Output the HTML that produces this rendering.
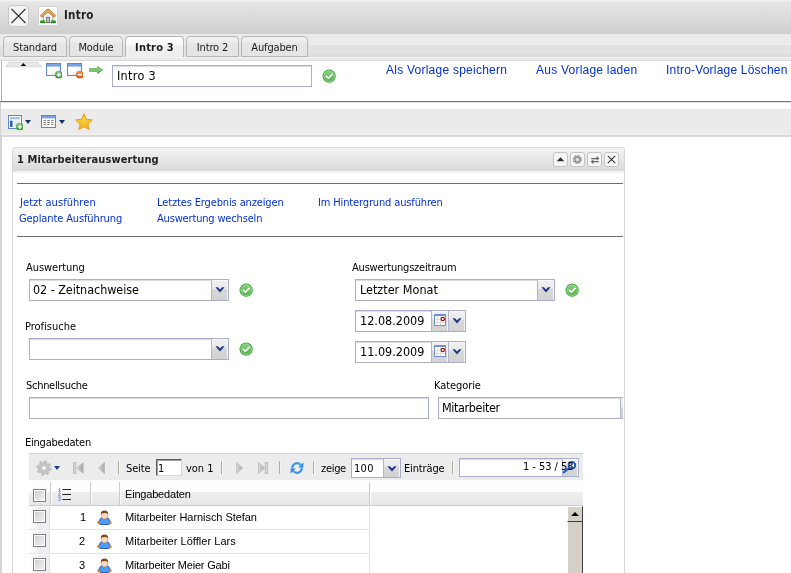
<!DOCTYPE html>
<html lang="de">
<head>
<meta charset="utf-8">
<title>Intro</title>
<style>
html,body{margin:0;padding:0;}
body{width:791px;height:573px;overflow:hidden;position:relative;background:#fff;
 font-family:"DejaVu Sans Condensed","Liberation Sans",sans-serif;font-size:11px;color:#000;}
.a{position:absolute;white-space:nowrap;}
.t{position:absolute;white-space:nowrap;line-height:14px;letter-spacing:-0.15px;will-change:transform;}
.ar{font-family:"Liberation Sans",sans-serif;letter-spacing:0;}
.lnk{color:#0645c8;}
/* top header */
#hdr{left:0;top:0;width:791px;height:34px;background:linear-gradient(#eaeaea 0,#e4e4e4 4px,#cecece 100%);border-top:1px solid #f2f2f2;box-sizing:border-box;}
#tabbar{left:0;top:34px;width:791px;height:23px;background:linear-gradient(#ebebeb 0,#ebebeb 11px,#e2e2e2 11px,#e2e2e2 20px,#dcdcdc 20px,#dcdcdc 100%);}
.tab{position:absolute;top:36px;height:21px;box-sizing:border-box;border:1px solid #b6b6b6;border-radius:4px 4px 0 0;background:linear-gradient(#f0f0f0 0,#eeeeee 5px,#e6e6e6 6px,#e4e4e4 100%);text-align:center;line-height:21px;letter-spacing:-0.15px;font-size:11px;color:#1c1c1c;will-change:transform;}
.tab.act{top:36px;height:22px;border-bottom:none;background:linear-gradient(#fcfcfc 0,#fafafa 8px,#efefef 9px,#eeeeee 100%);font-weight:bold;line-height:21px;letter-spacing:0.2px;}
.inp{position:absolute;box-sizing:border-box;border:1px solid #a9aecb;background:#fff;box-shadow:inset 0 1px 1px #d8dae6;}
.btn{position:absolute;box-sizing:border-box;background:linear-gradient(#f1f1f1 0,#e9e9e9 44%,#d8d8d8 46%,#d2d2d2 100%);border-left:1px solid #b4b7cc;box-shadow:inset -1px 0 0 #f4f4f4, inset 0 1px 0 #f8f8f8;}
.pb{position:absolute;top:152px;width:15px;height:15px;box-sizing:border-box;border:1px solid #c4c4c4;border-radius:3px;background:#f6f6f6;}
.hr{position:absolute;left:17px;width:606px;height:1px;background:#6e6e6e;}
.sep{position:absolute;top:461px;width:1px;height:13px;background:#b0ab9c;box-shadow:1px 0 0 #f6f6f6;}
.cb{position:absolute;left:33px;width:13px;height:13px;box-sizing:border-box;border:1px solid #9a9a9a;background:linear-gradient(135deg,#d4d4d4,#f8f8f8);box-shadow:inset 1px 1px 0 #c0c0c0, inset -1px -1px 0 #fff;}
.rowl{position:absolute;left:29px;width:341px;height:1px;background:#e4e4e4;}
.gc{position:absolute;left:29px;width:21px;background:linear-gradient(90deg,#ffffff 0,#fafafa 6px,#eceef2 8px,#eceef2 100%);border-right:1px solid #e0e0e0;box-sizing:border-box;}
</style>
</head>
<body>
<svg width="0" height="0" style="position:absolute">
<defs>
<linearGradient id="gGreen" x1="0" y1="0" x2="0" y2="1"><stop offset="0" stop-color="#7ccf6e"/><stop offset="1" stop-color="#2f9a2a"/></linearGradient>
<linearGradient id="gOrange" x1="0" y1="0" x2="0" y2="1"><stop offset="0" stop-color="#f79a4a"/><stop offset="1" stop-color="#d9520c"/></linearGradient>
<linearGradient id="gWin" x1="0" y1="0" x2="1" y2="1"><stop offset="0" stop-color="#ffffff"/><stop offset="0.5" stop-color="#ffffff"/><stop offset="1" stop-color="#cfd6e2"/></linearGradient>
<linearGradient id="gArr" x1="0" y1="0" x2="0" y2="1"><stop offset="0" stop-color="#8fd486"/><stop offset="0.5" stop-color="#7cca74"/><stop offset="1" stop-color="#4aa846"/></linearGradient>
<linearGradient id="gGreen2" x1="0" y1="0" x2="0" y2="1"><stop offset="0" stop-color="#86d07e"/><stop offset="1" stop-color="#4fb049"/></linearGradient>
<linearGradient id="gStar" x1="0" y1="0" x2="0" y2="1"><stop offset="0" stop-color="#ffe25a"/><stop offset="1" stop-color="#f2a81a"/></linearGradient>
<linearGradient id="gNav" x1="0" y1="0" x2="1" y2="0"><stop offset="0" stop-color="#d8d8d8"/><stop offset="1" stop-color="#a8a8a8"/></linearGradient>
<symbol id="chk" viewBox="0 0 15 15"><circle cx="7.5" cy="7.5" r="6.9" fill="#35a030"/><circle cx="7.5" cy="7.5" r="5.6" fill="url(#gGreen2)" stroke="#b2e4aa" stroke-width="0.8"/><path d="M4.7 7.7 L6.7 9.7 L10.5 5.7" fill="none" stroke="#fff" stroke-width="1.8" stroke-linecap="round" stroke-linejoin="round"/></symbol>
<symbol id="chev" viewBox="0 0 10 6"><path d="M0.4 0.3 L2.9 0.3 L5 2.4 L7.1 0.3 L9.6 0.3 L5 5.5 Z" fill="#1c3588"/></symbol>
<symbol id="win" viewBox="0 0 16 14"><rect x="0.5" y="0.5" width="14" height="12" fill="url(#gWin)" stroke="#5f86cc" stroke-width="1"/><rect x="1" y="1" width="13" height="2.6" fill="#79a3e0"/></symbol>
<symbol id="plus" viewBox="0 0 8 8"><circle cx="4" cy="4" r="3.8" fill="url(#gGreen)" stroke="#2f8a28" stroke-width="0.5"/><path d="M4 1.8 V6.2 M1.8 4 H6.2" stroke="#fff" stroke-width="1.5"/></symbol>
<symbol id="minus" viewBox="0 0 8 8"><circle cx="4" cy="4" r="3.8" fill="url(#gOrange)" stroke="#c44a08" stroke-width="0.5"/><path d="M1.8 4 H6.2" stroke="#fff" stroke-width="1.6"/></symbol>
<symbol id="cal" viewBox="0 0 12 12"><rect x="0.5" y="0.5" width="11" height="11" fill="#fff" stroke="#6f93cc"/><rect x="0" y="0" width="12" height="2" fill="#6f93cc"/><path d="M3.5 2.5 V11 M6.5 2.5 V11 M1 5.5 H11 M1 8.5 H11" stroke="#dcdcdc" stroke-width="1"/><circle cx="8.8" cy="5" r="1.7" fill="#fff" stroke="#9c1010" stroke-width="1.2"/></symbol>
<linearGradient id="gCb" x1="0" y1="0" x2="1" y2="1"><stop offset="0" stop-color="#cfcfcf"/><stop offset="1" stop-color="#f2f2f2"/></linearGradient><symbol id="cb" viewBox="0 0 13 13"><rect x="0.5" y="0.5" width="12" height="12" fill="#fff" stroke="#808080"/><rect x="2" y="2" width="9" height="9" fill="url(#gCb)"/></symbol>
<symbol id="user" viewBox="0 0 15 15"><path d="M1 13 L3.6 8.4 Q7.5 6.4 11.4 8.4 L14 13 L11.2 14.6 L3.8 14.6 Z" fill="#4a9bf5" stroke="#1b45b8" stroke-width="0.9" stroke-linejoin="round"/><circle cx="1.4" cy="12.4" r="1.2" fill="#f08a24"/><circle cx="13.6" cy="12.4" r="1.2" fill="#f08a24"/><ellipse cx="7.5" cy="5" rx="3.5" ry="3.9" fill="#f7dcc4" stroke="#c58a5a" stroke-width="0.5"/><path d="M3.8 4.8 Q3.6 0.6 7.5 0.6 Q11.4 0.6 11.2 4.8 L10.4 3.4 Q7.5 2.4 5 3.6 Z" fill="#8b4a1e"/></symbol>
</defs></svg>
<!-- header -->
<div class="a" id="hdr"></div>
<div class="a" id="tabbar"></div>
<div class="a" style="left:8px;top:5px;width:21px;height:22px;box-sizing:border-box;border:1px solid #c9c9c9;border-radius:4px;background:#f3f3f3;"></div>
<svg class="a" style="left:8px;top:5px" width="21" height="22"><path d="M3.5 4 L17.5 18 M17.5 4 L3.5 18" stroke="#3a3a3a" stroke-width="1.2" fill="none"/></svg>
<div class="a" style="left:38px;top:6px;width:20px;height:20px;box-sizing:border-box;border:1px solid #d4d4d4;background:#fff;"></div>
<svg class="a" style="left:39px;top:6px" width="19" height="19" viewBox="0 0 19 19">
<rect x="4.3" y="8" width="9.6" height="8.8" fill="#f4f6fa" stroke="#8a8f99" stroke-width="0.8"/>
<path d="M4.3 9 L9 4.5 L13.9 9 Z" fill="#f4f6fa"/>
<rect x="7.3" y="11.2" width="3.4" height="5.4" fill="#b9b9b9" stroke="#6d6d6d" stroke-width="0.8"/>
<path d="M1.2 9.5 L8 3.3 L10 3.3 L16.8 9.5 L15.2 11.5 L9 6.1 L2.8 11.5 Z" fill="#dca258" stroke="#b87830" stroke-width="0.7" stroke-linejoin="round"/>
<ellipse cx="3.6" cy="15.6" rx="2.7" ry="1.6" fill="#3fa62c"/>
<ellipse cx="14.4" cy="15.6" rx="2.7" ry="1.6" fill="#3fa62c"/>
<rect x="1" y="15.8" width="5.2" height="1.3" fill="#2b8a1c"/><rect x="11.8" y="15.8" width="5.2" height="1.3" fill="#2b8a1c"/>
</svg>

<!-- tabs -->
<div class="tab" style="left:3px;width:64px;">Standard</div>
<div class="tab" style="left:69px;width:54px;">Module</div>
<div class="tab act" style="left:125px;width:59px;">Intro 3</div>
<div class="tab" style="left:186px;width:53px;">Intro 2</div>
<div class="tab" style="left:241px;width:67px;">Aufgaben</div>

<!-- content strip -->
<div class="a" style="left:0;top:57px;width:791px;height:4px;background:linear-gradient(#f2f2f2 0,#f2f2f2 1px,#eaeaea 1px,#eaeaea 3px,#dcdcdc 3px,#dcdcdc 100%);"></div>
<div class="a" style="left:1px;top:61px;width:1px;height:40px;background:#b0b0b0;"></div>
<div class="a" style="left:0;top:101px;width:791px;height:1px;background:#757575;"></div>
<div class="a" style="left:0;top:102px;width:791px;height:1px;background:#e2e2e2;"></div><div class="a" style="left:0;top:102px;width:1px;height:34px;background:#d8d8d8;"></div>

<svg class="a" style="left:5px;top:61px" width="38" height="7" viewBox="0 0 38 7"><path d="M0.8 5.8 L4.4 1.2 L32.8 1.2 L36.4 5.8 Z" fill="#e8e8e8" stroke="#cacaca" stroke-width="0.7"/><path d="M15.6 4.9 L18.4 2 L21.2 4.9 Z" fill="#111"/></svg>
<svg class="a" style="left:46px;top:63px" width="16" height="14"><use href="#win"/></svg>
<svg class="a" style="left:54.5px;top:71px" width="7.6" height="7.6"><use href="#plus"/></svg>
<svg class="a" style="left:67px;top:63px" width="16" height="14"><use href="#win"/></svg>
<svg class="a" style="left:75.7px;top:71px" width="7.6" height="7.6"><use href="#minus"/></svg>
<svg class="a" style="left:89px;top:66px" width="14" height="8" viewBox="0 0 14 8"><path d="M0.4 2.6 H8.6 V0.3 L13.7 4 L8.6 7.7 V5.4 H0.4 Z" fill="url(#gArr)" stroke="#4a9a46" stroke-width="0.6" stroke-linejoin="round"/></svg>
<svg class="a" style="left:322px;top:68.9px" width="14.3" height="14.3"><use href="#chk"/></svg>
<div class="inp" style="left:112px;top:65px;width:200px;height:22px;"></div>

<!-- toolbar -->
<div class="a" style="left:0;top:109px;width:791px;height:25px;background:#ebebeb;"></div><div class="a" style="left:0;top:134px;width:791px;height:1px;background:#f3f3f3;"></div><div class="a" style="left:0;top:135px;width:791px;height:2px;background:linear-gradient(#d4d4d4,#dcdcdc);"></div><div class="a" style="left:0;top:102px;width:1px;height:33px;background:#d2d2d2;"></div>
<div class="a" style="left:0;top:135px;width:2px;height:438px;background:#d5d5d5;"></div>


<svg class="a" style="left:8px;top:115px" width="16" height="16" viewBox="0 0 16 16"><rect x="0.5" y="0.5" width="13" height="13" fill="#fff" stroke="#5f86cc"/><rect x="2" y="2" width="10" height="2.4" fill="#a9c4ea"/><rect x="2" y="5.6" width="2.6" height="6.4" fill="#2f62c0"/><rect x="5.8" y="5.6" width="6.2" height="6.4" fill="#e4e8ee"/></svg>
<svg class="a" style="left:15.8px;top:122.5px" width="7.6" height="7.6"><use href="#plus"/></svg>
<svg class="a" style="left:25px;top:120px" width="6" height="4" viewBox="0 0 6 4"><path d="M0 0 H6 L3 4 Z" fill="#15305e"/></svg>
<svg class="a" style="left:41px;top:115px" width="15" height="13" viewBox="0 0 15 13"><rect x="0.5" y="0.5" width="14" height="12" fill="#fff" stroke="#5f86cc"/><rect x="1" y="1" width="13" height="2.4" fill="#79a3e0"/><path d="M2.4 5.5 H5 M6.2 5.5 H8.8 M10 5.5 H12.6 M2.4 7.5 H5 M6.2 7.5 H8.8 M10 7.5 H12.6 M2.4 9.5 H5 M6.2 9.5 H8.8 M10 9.5 H12.6" stroke="#8a8a8a" stroke-width="1"/></svg>
<svg class="a" style="left:59px;top:120px" width="6" height="4" viewBox="0 0 6 4"><path d="M0 0 H6 L3 4 Z" fill="#15305e"/></svg>
<svg class="a" style="left:75px;top:113px" width="18" height="18" viewBox="0 0 18 18"><path d="M9 1 L11.4 6.3 L17.2 6.9 L12.9 10.8 L14.1 16.5 L9 13.6 L3.9 16.5 L5.1 10.8 L0.8 6.9 L6.6 6.3 Z" fill="url(#gStar)" stroke="#eaa81e" stroke-width="1.2" stroke-linejoin="round"/></svg>
<!-- panel -->
<div class="a" style="left:12px;top:147px;width:613px;height:430px;box-sizing:border-box;border:1px solid #d6d6d6;border-radius:3px 3px 0 0;background:#fff;"></div>
<div class="a" style="left:13px;top:148px;width:611px;height:23px;background:linear-gradient(#f3f3f3,#d9d9d9);border-radius:2px 2px 0 0;"></div>
<div class="a" style="left:13px;top:171px;width:611px;height:2px;background:#f3f3f3;"></div>
<div class="pb" style="left:553px;"></div>
<div class="pb" style="left:570px;"></div>
<div class="pb" style="left:587px;"></div>
<div class="pb" style="left:604px;"></div>

<svg class="a" style="left:553px;top:152px" width="15" height="15" viewBox="0 0 15 15"><path d="M3.7 9.2 L7.5 5.3 L11.3 9.2 Z" fill="#303030"/></svg>
<svg class="a" style="left:570.2px;top:152.2px" width="14" height="14" viewBox="0 0 14 14"><circle cx="7.3" cy="7.5" r="2.7" fill="#e8e8e8" stroke="#9a9a9a" stroke-width="2.2"/><circle cx="7.3" cy="7.5" r="4.1" fill="none" stroke="#9a9a9a" stroke-width="1.2" stroke-dasharray="1.6 1.62"/></svg>
<svg class="a" style="left:587.5px;top:152.5px" width="14" height="14" viewBox="0 0 14 14"><path d="M3.2 6.2 V5 H8.6 V3 L11.4 5.4 L8.6 7.6 V6.2 Z M10.8 8 V9.2 H5.4 V11.2 L2.6 8.8 L5.4 6.6 V8 Z" fill="#666"/></svg>
<svg class="a" style="left:604px;top:152px" width="15" height="15" viewBox="0 0 15 15"><path d="M3.8 3.8 L11.2 11.2 M11.2 3.8 L3.8 11.2" stroke="#333" stroke-width="1.1" fill="none"/></svg>
<div class="hr" style="top:183px;"></div>
<div class="hr" style="top:236px;"></div>

<!-- form -->
<div class="inp" style="left:29px;top:279px;width:200px;height:22px;"></div>
<div class="btn" style="left:211px;top:280px;width:17px;height:20px;"></div>
<div class="inp" style="left:29px;top:338px;width:200px;height:22px;"></div>
<div class="btn" style="left:211px;top:339px;width:17px;height:20px;"></div>

<div class="inp" style="left:355px;top:279px;width:200px;height:22px;"></div>
<div class="btn" style="left:537px;top:280px;width:17px;height:20px;"></div>
<div class="inp" style="left:355px;top:310px;width:111px;height:22px;"></div>
<div class="btn" style="left:431px;top:311px;width:17px;height:20px;"></div>
<div class="btn" style="left:448px;top:311px;width:17px;height:20px;"></div>
<div class="inp" style="left:355px;top:341px;width:111px;height:22px;"></div>
<div class="btn" style="left:431px;top:342px;width:17px;height:20px;"></div>
<div class="btn" style="left:448px;top:342px;width:17px;height:20px;"></div>


<svg class="a" style="left:215px;top:287px" width="10" height="6"><use href="#chev"/></svg>
<svg class="a" style="left:215px;top:346px" width="10" height="6"><use href="#chev"/></svg>
<svg class="a" style="left:541px;top:287px" width="10" height="6"><use href="#chev"/></svg>
<svg class="a" style="left:452px;top:318px" width="10" height="6"><use href="#chev"/></svg>
<svg class="a" style="left:452px;top:349px" width="10" height="6"><use href="#chev"/></svg>
<svg class="a" style="left:434px;top:314px" width="12" height="12"><use href="#cal"/></svg>
<svg class="a" style="left:434px;top:345px" width="12" height="12"><use href="#cal"/></svg>
<svg class="a" style="left:238.85px;top:282.85px" width="14.3" height="14.3"><use href="#chk"/></svg>
<svg class="a" style="left:238.85px;top:341.85px" width="14.3" height="14.3"><use href="#chk"/></svg>
<svg class="a" style="left:565.0px;top:282.85px" width="14.3" height="14.3"><use href="#chk"/></svg>
<div class="inp" style="left:29px;top:397px;width:400px;height:22px;"></div>
<div class="inp" style="left:438px;top:397px;width:185px;height:22px;border-right:none;"></div><div class="btn" style="left:620px;top:398px;width:3px;height:20px;box-shadow:none;"></div>


<!-- grid toolbar -->
<div class="a" style="left:29px;top:453px;width:554px;height:27px;box-sizing:border-box;background:#ececec;border-top:1px solid #d2d2d2;"></div>
<div class="sep" style="left:118px;"></div>
<div class="sep" style="left:221px;"></div>
<div class="sep" style="left:279px;"></div>
<div class="sep" style="left:313px;"></div>
<div class="sep" style="left:452px;"></div>
<div class="a" style="left:156px;top:459px;width:26px;height:17px;box-sizing:border-box;background:#fff;border:1px solid;border-color:#5c5c5c #d8d8d8 #d8d8d8 #5c5c5c;box-shadow:inset 1px 1px 0 #a0a0a0;"></div>
<div class="inp" style="left:351px;top:458px;width:50px;height:20px;"></div>
<div class="btn" style="left:383px;top:459px;width:17px;height:18px;"></div>
<div class="inp" style="left:459px;top:458px;width:120px;height:19px;"></div>
<div class="btn" style="left:562px;top:459px;width:16px;height:17px;"></div>


<svg class="a" style="left:36px;top:460px" width="16" height="16" viewBox="0 0 16 16"><circle cx="8" cy="8" r="4.3" fill="none" stroke="#c4c4c4" stroke-width="3"/><circle cx="8" cy="8" r="6.7" fill="none" stroke="#c0c0c0" stroke-width="2.2" stroke-dasharray="2.6 2.66"/><circle cx="8" cy="8" r="5.9" fill="none" stroke="#a8a8a8" stroke-width="0.5"/><circle cx="8" cy="8" r="2.4" fill="#f6f6f6" stroke="#a4a4a4" stroke-width="0.7"/></svg>
<svg class="a" style="left:54px;top:466px" width="6" height="4" viewBox="0 0 6 4"><path d="M0 0 H6 L3 4 Z" fill="#15408e"/></svg>
<svg class="a" style="left:73px;top:462px" width="11" height="12" viewBox="0 0 11 12"><rect x="0.3" y="0.3" width="2.6" height="11.4" fill="#d4d4d4" stroke="#b0b0b0" stroke-width="0.6"/><path d="M10.2 0.5 V11.5 L3.8 6 Z" fill="url(#gNav)" stroke="#b0b0b0" stroke-width="0.6"/></svg>
<svg class="a" style="left:98px;top:462px" width="7" height="12" viewBox="0 0 7 12"><path d="M6.5 0.5 V11.5 L0.4 6 Z" fill="url(#gNav)" stroke="#b0b0b0" stroke-width="0.6"/></svg>
<svg class="a" style="left:236px;top:462px" width="7" height="12" viewBox="0 0 7 12"><path d="M0.5 0.5 V11.5 L6.6 6 Z" fill="url(#gNav)" stroke="#b0b0b0" stroke-width="0.6"/></svg>
<svg class="a" style="left:258px;top:462px" width="11" height="12" viewBox="0 0 11 12"><rect x="7.1" y="0.3" width="2.6" height="11.4" fill="#d4d4d4" stroke="#b0b0b0" stroke-width="0.6"/><path d="M0.5 0.5 V11.5 L6.6 6 Z" fill="url(#gNav)" stroke="#b0b0b0" stroke-width="0.6"/></svg>
<svg class="a" style="left:290px;top:461px" width="14" height="14" viewBox="0 0 14 14"><g fill="none" stroke="#3a94f2" stroke-width="2.1"><path d="M2.3 7.2 A4.7 4.7 0 0 1 10.6 3.9"/><path d="M11.7 6.8 A4.7 4.7 0 0 1 3.4 10.1"/></g><path d="M13.4 1.2 V6.4 H8.2 Z" fill="#2f88ea"/><path d="M0.6 12.8 V7.6 H5.8 Z" fill="#2f88ea"/></svg>
<svg class="a" style="left:387px;top:466px" width="10" height="6"><use href="#chev"/></svg>
<svg class="a" style="left:562px;top:460px" width="16" height="16" viewBox="0 0 16 16"><path d="M1.8 12.4 L7.4 7.6" stroke="#2a5fc0" stroke-width="2.2" stroke-linecap="round"/><circle cx="9.9" cy="5.3" r="3.3" fill="#d6e6fa" fill-opacity="0.6" stroke="#2358b8" stroke-width="1.9"/></svg>
<!-- grid header -->
<div class="a" style="left:29px;top:482px;width:554px;height:24px;box-sizing:border-box;background:linear-gradient(#ffffff 0,#fdfdfd 10px,#efefef 10px,#e7e7e7 100%);border-bottom:1px solid #cccccc;"></div>
<div class="a" style="left:50px;top:482px;width:1px;height:23px;background:#cccccc;box-shadow:1px 0 0 #fbfbfb;"></div>
<div class="a" style="left:90px;top:482px;width:1px;height:23px;background:#cccccc;box-shadow:1px 0 0 #fbfbfb;"></div>
<div class="a" style="left:119px;top:482px;width:1px;height:23px;background:#cccccc;box-shadow:1px 0 0 #fbfbfb;"></div>
<div class="a" style="left:369px;top:482px;width:1px;height:23px;background:#cccccc;box-shadow:1px 0 0 #fbfbfb;"></div>
<svg class="a" style="left:33px;top:489px" width="13" height="13"><use href="#cb"/></svg>

<!-- rows -->
<div class="gc" style="top:507px;height:22px;"></div>
<div class="gc" style="top:531px;height:22px;"></div>
<div class="gc" style="top:555px;height:22px;"></div>
<div class="rowl" style="top:529px;"></div>
<div class="rowl" style="top:553px;"></div>
<div class="a" style="left:369px;top:506px;width:1px;height:70px;background:#e4e4e4;"></div>
<svg class="a" style="left:33px;top:510px" width="13" height="13"><use href="#cb"/></svg>
<svg class="a" style="left:33px;top:534px" width="13" height="13"><use href="#cb"/></svg>
<svg class="a" style="left:33px;top:558px" width="13" height="13"><use href="#cb"/></svg>


<svg class="a" style="left:58px;top:488px" width="14" height="13" viewBox="0 0 14 13"><path d="M4.4 1.5 H13 M4.4 6.5 H13 M4.4 11.5 H13" stroke="#222" stroke-width="1"/><path d="M0.6 1.4 L1.6 0.4 V3.2 M0.4 3.4 H2.8 M0.4 5.4 Q1.6 4.6 2.6 5.4 L0.4 8 H2.8 M0.4 9.6 H2.6 L1.4 11 Q3 11.4 2.2 12.4 Q1.4 13 0.4 12.4" fill="none" stroke="#4a86d8" stroke-width="0.8"/></svg>
<svg class="a" style="left:97px;top:510px" width="15" height="15"><use href="#user"/></svg>
<svg class="a" style="left:97px;top:534px" width="15" height="15"><use href="#user"/></svg>
<svg class="a" style="left:97px;top:558px" width="15" height="15"><use href="#user"/></svg>
<!-- scrollbar -->
<div class="a" style="left:567px;top:506px;width:16px;height:70px;background:#d4d0c8;box-sizing:border-box;border:1px solid;border-color:#fff #404040 #404040 #fff;"></div>
<div class="a" style="left:567px;top:506px;width:16px;height:16px;background:#d4d0c8;box-sizing:border-box;border:1px solid;border-color:#fff #404040 #404040 #fff;"></div>
<svg class="a" style="left:567px;top:506px" width="16" height="16"><path d="M4 10 L8 6 L12 10 Z" fill="#000"/></svg>

<div class="t" style='left:64.2px;top:8px;font-family:"DejaVu Sans Condensed","Liberation Sans",sans-serif;font-size:11.5px;color:#222;letter-spacing:0.24px;font-weight:bold;'>Intro</div>
<div class="t" style='left:116.6px;top:69px;font-family:"DejaVu Sans Condensed","Liberation Sans",sans-serif;font-size:12.5px;color:#000;letter-spacing:0.3px;'>Intro 3</div>
<div class="t" style='left:386.4px;top:63px;font-family:"Liberation Sans",sans-serif;font-size:12px;color:#0531d6;letter-spacing:0.24px;'>Als Vorlage speichern</div>
<div class="t" style='left:536.3px;top:63px;font-family:"Liberation Sans",sans-serif;font-size:12px;color:#0531d6;letter-spacing:0.23px;'>Aus Vorlage laden</div>
<div class="t" style='left:666.1px;top:63px;font-family:"Liberation Sans",sans-serif;font-size:12px;color:#0531d6;letter-spacing:0.2px;'>Intro-Vorlage Löschen</div>
<div class="t" style='left:17.4px;top:153px;font-family:"DejaVu Sans Condensed","Liberation Sans",sans-serif;font-size:11px;color:#222;letter-spacing:0.09px;font-weight:bold;'>1 Mitarbeiterauswertung</div>
<div class="t" style='left:20.3px;top:196px;font-family:"DejaVu Sans Condensed","Liberation Sans",sans-serif;font-size:11px;color:#0531d6;letter-spacing:0.06px;'>Jetzt ausführen</div>
<div class="t" style='left:19.2px;top:212px;font-family:"DejaVu Sans Condensed","Liberation Sans",sans-serif;font-size:11px;color:#0531d6;letter-spacing:-0.12px;'>Geplante Ausführung</div>
<div class="t" style='left:156.7px;top:196px;font-family:"DejaVu Sans Condensed","Liberation Sans",sans-serif;font-size:11px;color:#0531d6;letter-spacing:-0.13px;'>Letztes Ergebnis anzeigen</div>
<div class="t" style='left:157.2px;top:212px;font-family:"DejaVu Sans Condensed","Liberation Sans",sans-serif;font-size:11px;color:#0531d6;letter-spacing:-0.17px;'>Auswertung wechseln</div>
<div class="t" style='left:317.9px;top:196px;font-family:"DejaVu Sans Condensed","Liberation Sans",sans-serif;font-size:11px;color:#0531d6;letter-spacing:-0.14px;'>Im Hintergrund ausführen</div>
<div class="t" style='left:25.6px;top:261px;font-family:"DejaVu Sans Condensed","Liberation Sans",sans-serif;font-size:11px;color:#000;letter-spacing:-0.05px;'>Auswertung</div>
<div class="t" style='left:33.2px;top:283px;font-family:"DejaVu Sans Condensed","Liberation Sans",sans-serif;font-size:12.5px;color:#000;letter-spacing:-0.06px;'>02 - Zeitnachweise</div>
<div class="t" style='left:25.1px;top:320px;font-family:"DejaVu Sans Condensed","Liberation Sans",sans-serif;font-size:11px;color:#000;letter-spacing:-0.01px;'>Profisuche</div>
<div class="t" style='left:351.9px;top:261px;font-family:"DejaVu Sans Condensed","Liberation Sans",sans-serif;font-size:11px;color:#000;letter-spacing:-0.2px;'>Auswertungszeitraum</div>
<div class="t" style='left:359.6px;top:283px;font-family:"DejaVu Sans Condensed","Liberation Sans",sans-serif;font-size:12.5px;color:#000;letter-spacing:0.0px;'>Letzter Monat</div>
<div class="t" style='left:360.1px;top:314px;font-family:"DejaVu Sans Condensed","Liberation Sans",sans-serif;font-size:12.5px;color:#000;letter-spacing:-0.0px;'>12.08.2009</div>
<div class="t" style='left:360.1px;top:345px;font-family:"DejaVu Sans Condensed","Liberation Sans",sans-serif;font-size:12.5px;color:#000;letter-spacing:-0.0px;'>11.09.2009</div>
<div class="t" style='left:25.5px;top:379px;font-family:"DejaVu Sans Condensed","Liberation Sans",sans-serif;font-size:11px;color:#000;letter-spacing:-0.29px;'>Schnellsuche</div>
<div class="t" style='left:433.7px;top:379px;font-family:"DejaVu Sans Condensed","Liberation Sans",sans-serif;font-size:11px;color:#000;letter-spacing:-0.08px;'>Kategorie</div>
<div class="t" style='left:441.7px;top:401px;font-family:"DejaVu Sans Condensed","Liberation Sans",sans-serif;font-size:12.5px;color:#000;letter-spacing:-0.38px;'>Mitarbeiter</div>
<div class="t" style='left:25.3px;top:436px;font-family:"DejaVu Sans Condensed","Liberation Sans",sans-serif;font-size:11px;color:#000;letter-spacing:-0.22px;'>Eingabedaten</div>
<div class="t" style='left:126.0px;top:462px;font-family:"DejaVu Sans Condensed","Liberation Sans",sans-serif;font-size:11px;color:#000;letter-spacing:-0.15px;'>Seite</div>
<div class="t" style='left:158.2px;top:462px;font-family:"DejaVu Sans Condensed","Liberation Sans",sans-serif;font-size:11px;color:#000;letter-spacing:0px;'>1</div>
<div class="t" style='left:186.4px;top:462px;font-family:"DejaVu Sans Condensed","Liberation Sans",sans-serif;font-size:11px;color:#000;letter-spacing:-0.02px;'>von 1</div>
<div class="t" style='left:321.4px;top:462px;font-family:"DejaVu Sans Condensed","Liberation Sans",sans-serif;font-size:11px;color:#000;letter-spacing:-0.3px;'>zeige</div>
<div class="t" style='left:354.2px;top:462px;font-family:"DejaVu Sans Condensed","Liberation Sans",sans-serif;font-size:11px;color:#000;letter-spacing:0.28px;'>100</div>
<div class="t" style='left:403.8px;top:462px;font-family:"DejaVu Sans Condensed","Liberation Sans",sans-serif;font-size:11px;color:#000;letter-spacing:-0.14px;'>Einträge</div>
<div class="t" style='left:523.2px;top:460px;font-family:"DejaVu Sans Condensed","Liberation Sans",sans-serif;font-size:11px;color:#000;letter-spacing:-0.05px;'>1 - 53 / 53</div>
<div class="t" style='left:124.8px;top:487px;font-family:"Liberation Sans",sans-serif;font-size:11px;color:#000;letter-spacing:-0.19px;'>Eingabedaten</div>
<div class="t" style='left:79.9px;top:510px;font-family:"Liberation Sans",sans-serif;font-size:11px;color:#000;letter-spacing:0px;'>1</div>
<div class="t" style='left:79.2px;top:534px;font-family:"Liberation Sans",sans-serif;font-size:11px;color:#000;letter-spacing:0px;'>2</div>
<div class="t" style='left:79.1px;top:558px;font-family:"Liberation Sans",sans-serif;font-size:11px;color:#000;letter-spacing:0px;'>3</div>
<div class="t" style='left:124.8px;top:510px;font-family:"Liberation Sans",sans-serif;font-size:11px;color:#000;letter-spacing:-0.05px;'>Mitarbeiter Harnisch Stefan</div>
<div class="t" style='left:124.8px;top:534px;font-family:"Liberation Sans",sans-serif;font-size:11px;color:#000;letter-spacing:0.04px;'>Mitarbeiter Löffler Lars</div>
<div class="t" style='left:124.8px;top:558px;font-family:"Liberation Sans",sans-serif;font-size:11px;color:#000;letter-spacing:-0.19px;'>Mitarbeiter Meier Gabi</div>
</body>
</html>
